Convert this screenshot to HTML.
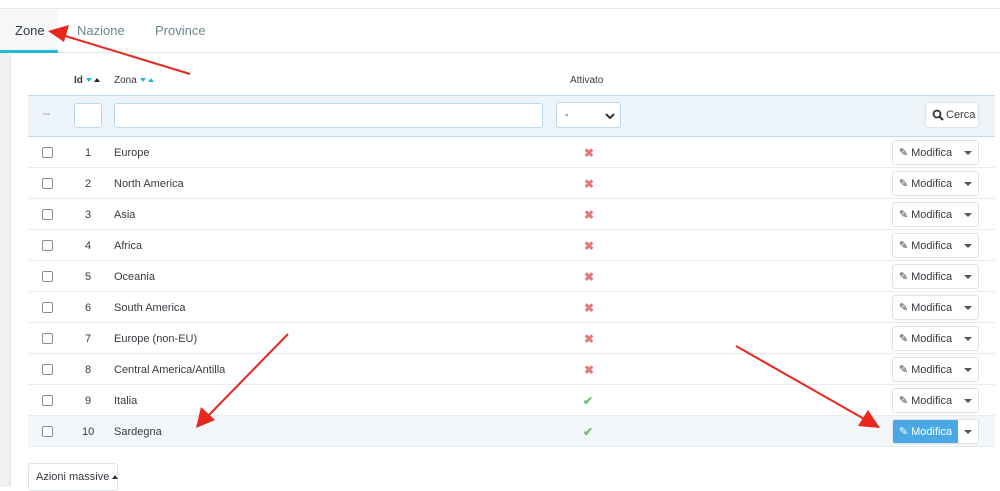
<!DOCTYPE html>
<html><head><meta charset="utf-8"><style>
*{box-sizing:border-box;margin:0;padding:0}
body{width:1000px;height:487px;overflow:hidden;background:#fff;font-family:"Liberation Sans",sans-serif;color:#363a41;position:relative;font-size:11px}
.top{position:absolute;left:0;top:0;width:1000px;height:9px;background:#fff;border-bottom:1px solid #e5e8ea}
.tabs{position:absolute;left:0;top:10px;width:1000px;height:43px;background:#fff;border-bottom:1px solid #e3e6e8}
.tab{position:absolute;top:0;height:43px;line-height:42px;font-size:13px;color:#6c868e}
.tab.act{background:#f5f7f8;color:#363a41;border-bottom:3px solid #25b9d7;left:0;width:58px;padding-left:15px}
.side{position:absolute;left:0;top:54px;width:11px;height:433px;background:#eff1f2;border-right:1px solid #dfe3e5}
.row{position:absolute;left:28px;width:967px;height:31px;border-bottom:1px solid #e8ecee;font-size:11px}
.row span{position:absolute;top:1px;line-height:31px}
.cb{position:absolute;left:14px;top:10px;width:11px;height:11px;border:1px solid #8a8f94;border-radius:2px;background:#fff}
.btn{position:absolute;left:864px;top:3px;width:87px;height:25px;border:1px solid #dfe3e5;border-radius:3px;background:#fff;font-size:11px}
.btn .l{position:absolute;left:0;top:0;width:65px;height:23px;line-height:24px;text-align:center}
.btn .car{position:absolute;left:71px;top:10px;border-left:4px solid transparent;border-right:4px solid transparent;border-top:4px solid #555}
.x{position:absolute;left:556px;top:1px;line-height:31px;color:#e07b7b;font-size:12px;font-weight:bold}
.ok{position:absolute;left:555px;top:1px;line-height:31px;color:#6bbf6b;font-size:12px;font-weight:bold}
.td{display:inline-block;width:0;height:0;border-left:3px solid transparent;border-right:3px solid transparent;vertical-align:middle}
.dn{border-top:4px solid #25b9d7}
.up{border-bottom:4px solid #25b9d7}
</style></head><body>
<div class="top"></div>
<div class="tabs">
<div class="tab act">Zone</div>
<div class="tab" style="left:77px">Nazione</div>
<div class="tab" style="left:155px">Province</div>
</div>
<div class="side"></div>
<div style="position:absolute;left:74px;top:75px;font-size:10px;font-weight:bold;white-space:nowrap">Id <i class="td dn"></i> <i class="td up" style="border-bottom-color:#222"></i></div>
<div style="position:absolute;left:114px;top:75px;font-size:10px;white-space:nowrap">Zona <i class="td dn"></i> <i class="td up"></i></div>
<div style="position:absolute;left:570px;top:75px;font-size:10px">Attivato</div>
<div style="position:absolute;left:28px;top:95px;width:967px;height:42px;background:#edf4f9;border-top:1px solid #bedcec;border-bottom:1px solid #bedcec">
<span style="position:absolute;left:15px;top:12px;color:#888">--</span>
<div style="position:absolute;left:46px;top:7px;width:28px;height:25px;background:#fff;border:1px solid #bcd9eb;border-radius:3px"></div>
<div style="position:absolute;left:86px;top:7px;width:429px;height:25px;background:#fff;border:1px solid #bcd9eb;border-radius:3px"></div>
<div style="position:absolute;left:528px;top:6px;width:65px;height:26px;background:#fff;border:1px solid #bcd9eb;border-radius:3px"><span style="position:absolute;left:8px;top:6px">-</span>
<svg width="10" height="8" style="position:absolute;right:5px;top:9px"><path d="M1 2 L5 6 L9 2" stroke="#333" stroke-width="2" fill="none"/></svg></div>
<div style="position:absolute;left:897px;top:6px;width:54px;height:26px;background:#fff;border:1px solid #dfe3e5;border-radius:3px;line-height:24px;padding-left:20px">Cerca
<svg width="12" height="12" style="position:absolute;left:6px;top:6px"><circle cx="5" cy="5" r="3.5" stroke="#333" stroke-width="1.8" fill="none"/><path d="M7.5 7.5 L11 11" stroke="#333" stroke-width="2"/></svg></div>
</div>
<div class="row" style="top:137px"><div class="cb"></div><span style="left:57px">1</span><span style="left:86px">Europe</span><div class="x">✖</div><div class="btn"><div class="l">✎ Modifica</div><div class="car"></div></div></div>
<div class="row" style="top:168px"><div class="cb"></div><span style="left:57px">2</span><span style="left:86px">North America</span><div class="x">✖</div><div class="btn"><div class="l">✎ Modifica</div><div class="car"></div></div></div>
<div class="row" style="top:199px"><div class="cb"></div><span style="left:57px">3</span><span style="left:86px">Asia</span><div class="x">✖</div><div class="btn"><div class="l">✎ Modifica</div><div class="car"></div></div></div>
<div class="row" style="top:230px"><div class="cb"></div><span style="left:57px">4</span><span style="left:86px">Africa</span><div class="x">✖</div><div class="btn"><div class="l">✎ Modifica</div><div class="car"></div></div></div>
<div class="row" style="top:261px"><div class="cb"></div><span style="left:57px">5</span><span style="left:86px">Oceania</span><div class="x">✖</div><div class="btn"><div class="l">✎ Modifica</div><div class="car"></div></div></div>
<div class="row" style="top:292px"><div class="cb"></div><span style="left:57px">6</span><span style="left:86px">South America</span><div class="x">✖</div><div class="btn"><div class="l">✎ Modifica</div><div class="car"></div></div></div>
<div class="row" style="top:323px"><div class="cb"></div><span style="left:57px">7</span><span style="left:86px">Europe (non-EU)</span><div class="x">✖</div><div class="btn"><div class="l">✎ Modifica</div><div class="car"></div></div></div>
<div class="row" style="top:354px"><div class="cb"></div><span style="left:57px">8</span><span style="left:86px">Central America/Antilla</span><div class="x">✖</div><div class="btn"><div class="l">✎ Modifica</div><div class="car"></div></div></div>
<div class="row" style="top:385px"><div class="cb"></div><span style="left:57px">9</span><span style="left:86px">Italia</span><div class="ok">✔</div><div class="btn"><div class="l">✎ Modifica</div><div class="car"></div></div></div>
<div class="row" style="top:416px;background:#f4f7f9"><div class="cb"></div><span style="left:54px">10</span><span style="left:86px">Sardegna</span><div class="ok">✔</div><div class="btn"><div class="l" style="background:#4aa9e4;color:#fff;border-radius:2px 0 0 2px">✎ Modifica</div><div class="car"></div></div></div>
<div style="position:absolute;left:28px;top:463px;width:90px;height:28px;border:1px solid #dfe3e5;border-radius:3px;font-size:11px;line-height:26px;padding-left:7px;white-space:nowrap">Azioni massive <i class="td" style="border-bottom:4px solid #333"></i></div>
<svg width="1000" height="487" style="position:absolute;left:0;top:0">
<g stroke="#e8281e" stroke-width="2" fill="#e8281e">
<line x1="190" y1="74" x2="62" y2="35"/><polygon points="48,31 69,25 64,42" stroke="none"/>
<line x1="288" y1="334" x2="206" y2="418"/><polygon points="196,428 201,407 215,420" stroke="none"/>
<line x1="736" y1="346" x2="866" y2="420"/><polygon points="880,428 858,426 868,410" stroke="none"/>
</g></svg>
</body></html>
